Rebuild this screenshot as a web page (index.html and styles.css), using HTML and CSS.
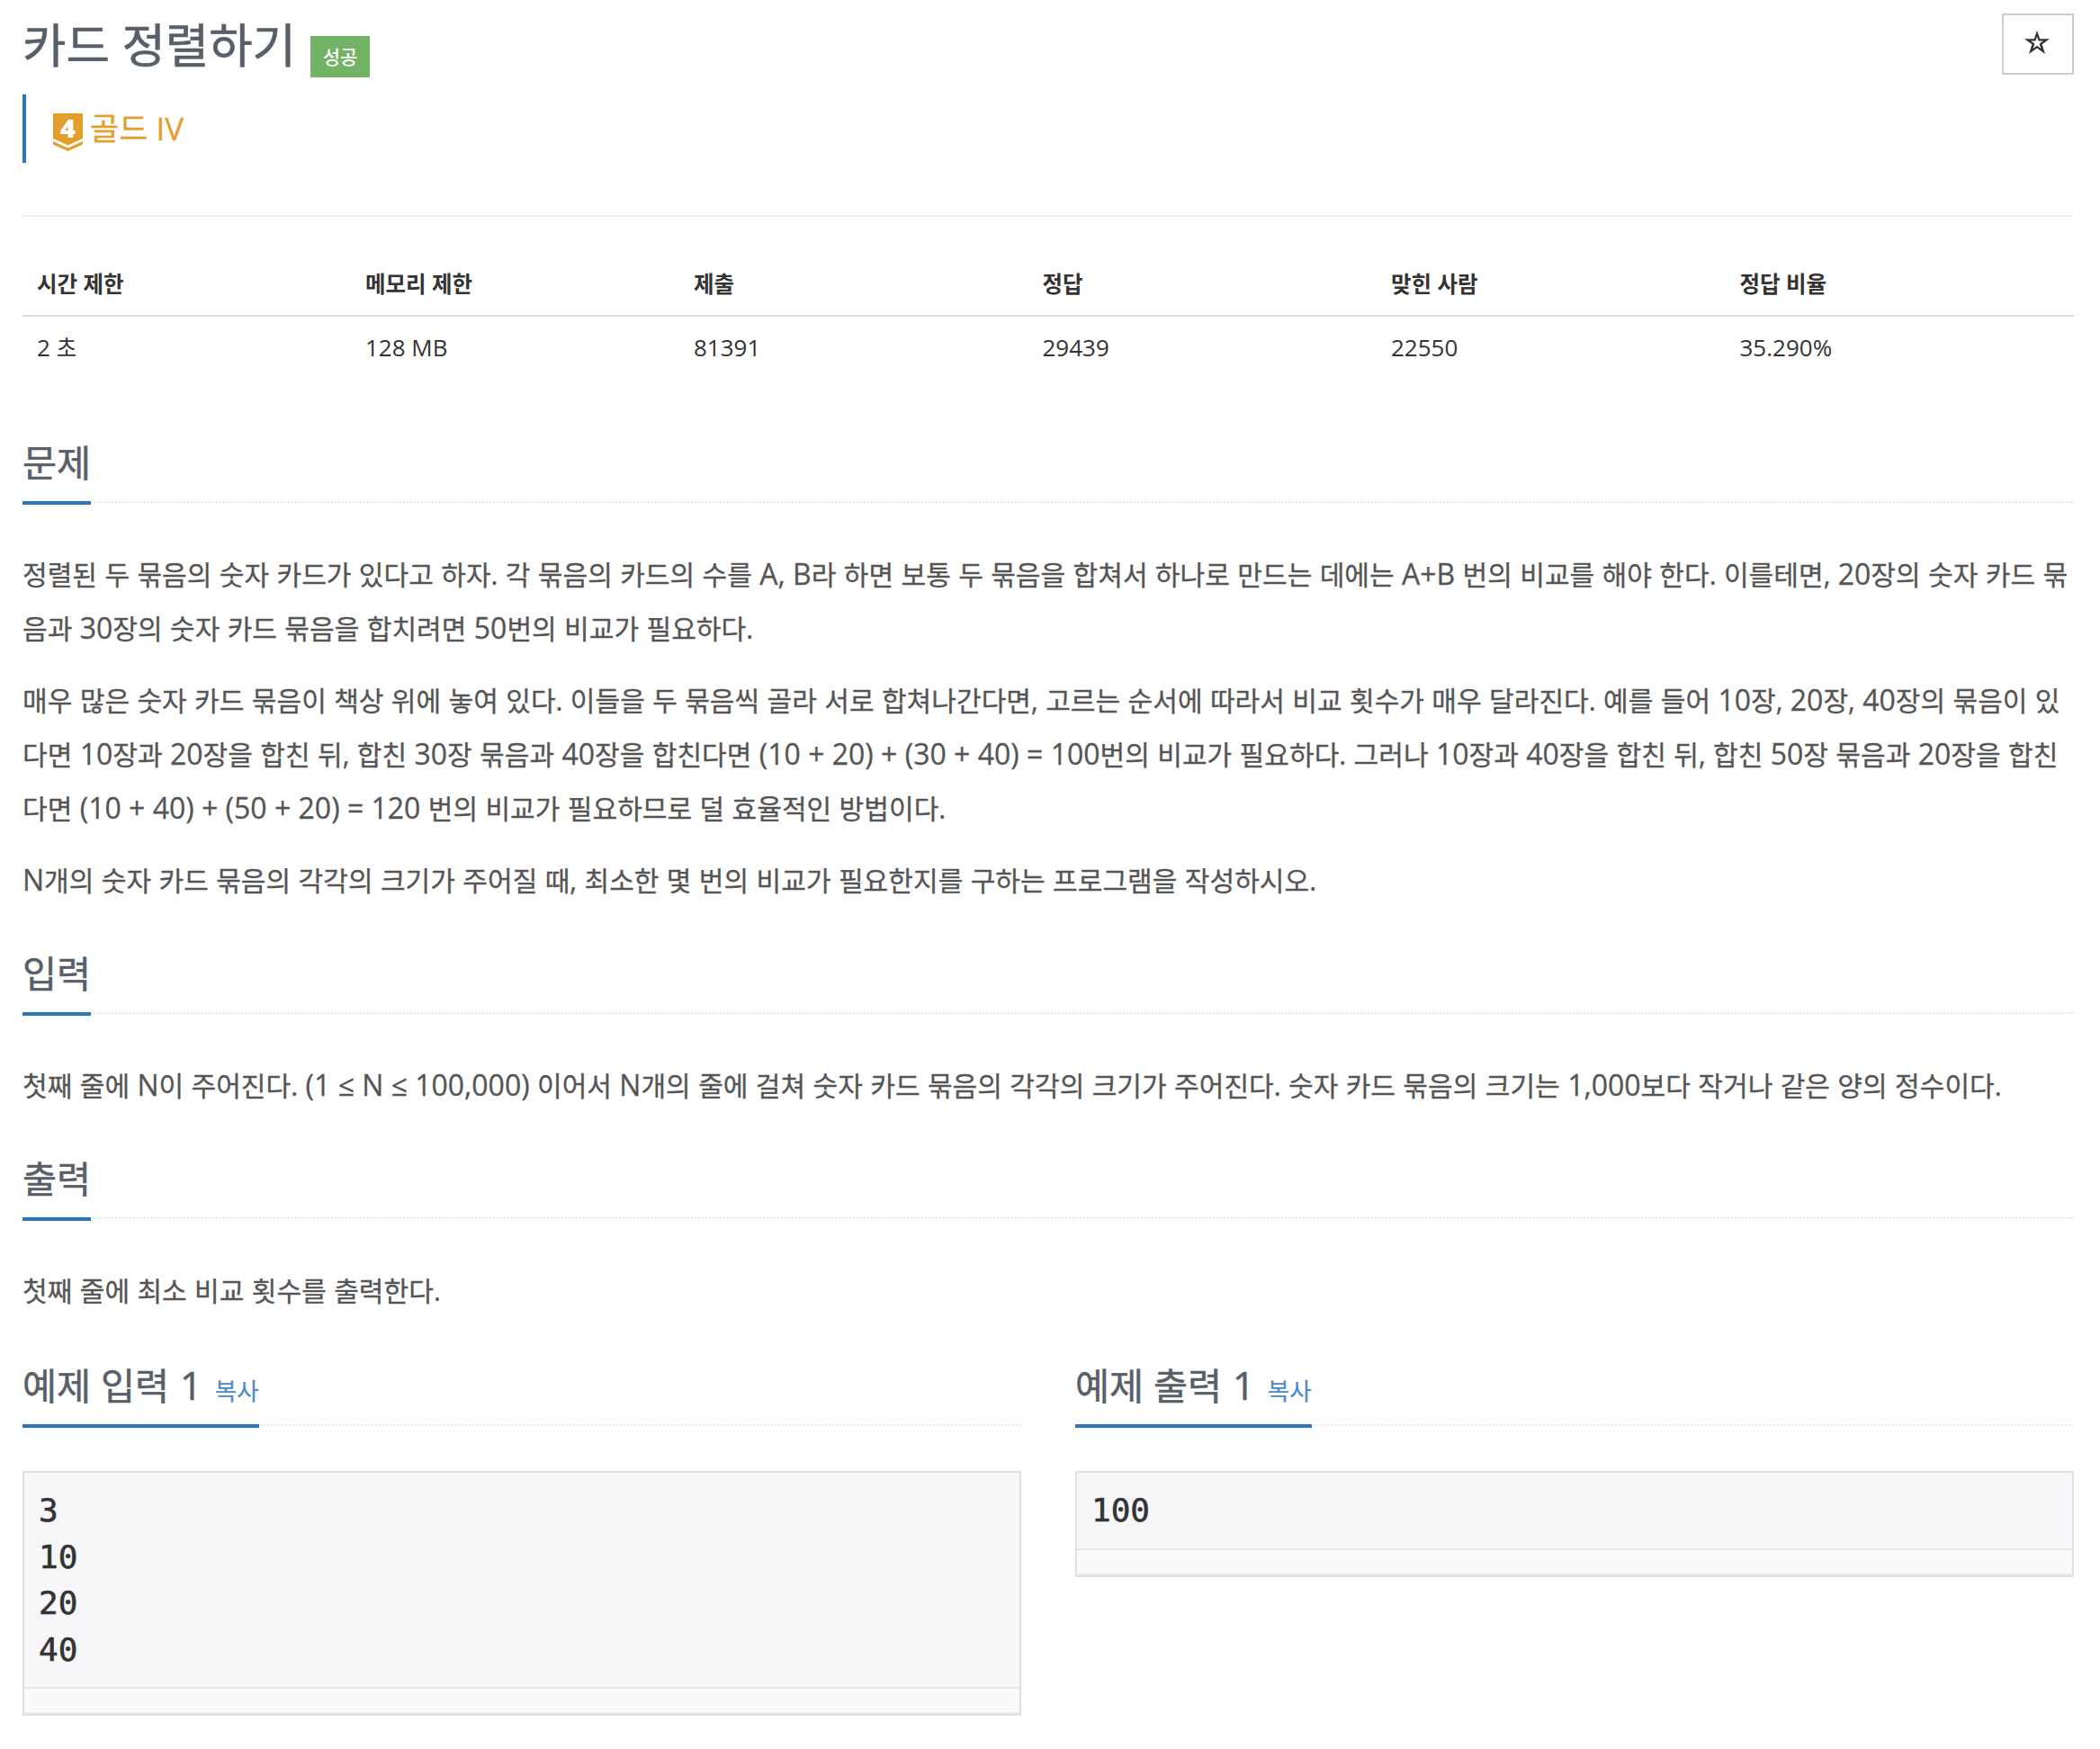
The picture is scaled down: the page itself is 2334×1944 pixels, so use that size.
FILE: index.html
```html
<!DOCTYPE html>
<html lang="ko">
<head>
    <meta charset="UTF-8">
    <title>카드 정렬하기</title>
    <link rel="stylesheet" href="styles.css">
</head>
<body>
    <div class="container">
        <div class="page-header">
            <div class="title-row">
                <h1><span class="problem-title">카드 정렬하기</span><span class="label-ac">성공</span></h1>
                <button type="button" class="button-star" aria-label="star">
                    <svg width="28" height="26" viewBox="0 0 28 26"><path fill="#333" fill-rule="evenodd" d="M14 0L17.2 9.2H28L19.6 15.2L23 26L14 19.6L5 26L8.4 15.2L0 9.2H10.8ZM14 6.8L12.4 11.6H7.2L11.4 14.6L9.6 20L14 16.8L18.4 20L16.6 14.6L20.8 11.6H15.6Z"/></svg>
                </button>
            </div>
            <blockquote class="tier">
                <svg class="tier-icon" width="33" height="42" viewBox="0 0 33 42">
                    <path d="M0 0H33V28L16.5 35.5L0 28Z" fill="#e39e2b"/>
                    <path d="M0 31L16.5 38.5L33 31V34.5L16.5 42L0 34.5Z" fill="#e39e2b"/>
                    <text x="16.5" y="27" text-anchor="middle" class="tier-number">4</text>
                </svg>
                <span>골드 IV</span>
            </blockquote>
        </div>

        <table class="table">
            <thead>
                <tr>
                    <th class="col-limit">시간 제한</th>
                    <th class="col-limit">메모리 제한</th>
                    <th>제출</th>
                    <th>정답</th>
                    <th>맞힌 사람</th>
                    <th>정답 비율</th>
                </tr>
            </thead>
            <tbody>
                <tr>
                    <td>2 <span class="unit">초</span></td>
                    <td>128 MB</td>
                    <td>81391</td>
                    <td>29439</td>
                    <td>22550</td>
                    <td>35.290%</td>
                </tr>
            </tbody>
        </table>

        <section class="section">
            <div class="headline"><h2>문제</h2></div>
            <div class="problem-text">
                <p>정렬된 두 묶음의 숫자 카드가 있다고 하자. 각 묶음의 카드의 수를 <span class="en">A, B</span>라 하면 보통 두 묶음을 합쳐서 하나로 만드는 데에는 <span class="en">A+B</span> 번의 비교를 해야 한다. 이를테면, <span class="en">20</span>장의 숫자 카드 묶<br>음과 <span class="en">30</span>장의 숫자 카드 묶음을 합치려면 <span class="en">50</span>번의 비교가 필요하다.</p>
                <p>매우 많은 숫자 카드 묶음이 책상 위에 놓여 있다. 이들을 두 묶음씩 골라 서로 합쳐나간다면, 고르는 순서에 따라서 비교 횟수가 매우 달라진다. 예를 들어 <span class="en">10</span>장, <span class="en">20</span>장, <span class="en">40</span>장의 묶음이 있<br>다면 <span class="en">10</span>장과 <span class="en">20</span>장을 합친 뒤, 합친 <span class="en">30</span>장 묶음과 <span class="en">40</span>장을 합친다면 <span class="en">(10 + 20) + (30 + 40) = 100</span>번의 비교가 필요하다. 그러나 <span class="en">10</span>장과 <span class="en">40</span>장을 합친 뒤, 합친 <span class="en">50</span>장 묶음과 <span class="en">20</span>장을 합친<br>다면 <span class="en">(10 + 40) + (50 + 20) = 120</span> 번의 비교가 필요하므로 덜 효율적인 방법이다.</p>
                <p><span class="en">N</span>개의 숫자 카드 묶음의 각각의 크기가 주어질 때, 최소한 몇 번의 비교가 필요한지를 구하는 프로그램을 작성하시오.</p>
            </div>
        </section>

        <section class="section">
            <div class="headline"><h2>입력</h2></div>
            <div class="problem-text">
                <p>첫째 줄에 <span class="en">N</span>이 주어진다. <span class="en">(1 ≤ N ≤ 100,000)</span> 이어서 <span class="en">N</span>개의 줄에 걸쳐 숫자 카드 묶음의 각각의 크기가 주어진다. 숫자 카드 묶음의 크기는 <span class="en">1,000</span>보다 작거나 같은 양의 정수이다.</p>
            </div>
        </section>

        <section class="section">
            <div class="headline"><h2>출력</h2></div>
            <div class="problem-text">
                <p>첫째 줄에 최소 비교 횟수를 출력한다.</p>
            </div>
        </section>

        <div class="samples">
            <section class="sample">
                <div class="headline"><h2>예제 입력 <span class="number">1</span> <a class="copy">복사</a></h2></div>
                <div class="sample-box">
<pre class="sampledata">3
10
20
40</pre>
                    <div class="sample-foot"></div>
                </div>
            </section>
            <section class="sample">
                <div class="headline"><h2>예제 출력 <span class="number">1</span> <a class="copy">복사</a></h2></div>
                <div class="sample-box">
<pre class="sampledata">100</pre>
                    <div class="sample-foot"></div>
                </div>
            </section>
        </div>
    </div>
</body>
</html>
```
FILE: styles.css
```css
* {
    box-sizing: border-box;
}

body {
    margin: 0;
    background: #fff;
    color: #333;
    font-family: "Open Sans", "Noto Sans CJK KR", sans-serif;
    font-size: 26px;
}

h1, h2, p, pre, blockquote {
    margin: 0;
    font-weight: normal;
}

.container {
    padding: 15px 29px 0 25px;
}

.page-header {
    height: 226px;
    border-bottom: 2px solid #eee;
}

.title-row {
    display: flex;
    justify-content: space-between;
    height: 90px;
}

h1 {
    display: flex;
    color: #585f69;
    font-size: 52.6px;
    line-height: 70px;
    -webkit-text-stroke: 0.6px;
}

.problem-title {
    width: 302px;
    white-space: nowrap;
}

.label-ac {
    align-self: flex-start;
    width: 66px;
    height: 46px;
    margin: 25px 0 0 18px;
    background: #72b365;
    color: #fff;
    font-size: 21px;
    font-weight: 500;
    line-height: 46px;
    text-align: center;
    -webkit-text-stroke: 0;
}

.button-star {
    display: flex;
    align-items: center;
    justify-content: center;
    width: 80px;
    height: 68px;
    padding: 0 2px 4px 0;
    border: 2px solid #ccc;
    background: #fff;
}

.tier {
    display: flex;
    height: 76px;
    padding: 21px 0 0 30px;
    border-left: 4px solid #2d76bd;
    color: #e39e2b;
    font-size: 35px;
    line-height: 33px;
    -webkit-text-stroke: 0.3px;
}

.tier-icon {
    margin-right: 8px;
    overflow: visible;
}

.tier-number {
    fill: #fff;
    font-size: 29px;
    font-weight: 800;
}

.table {
    width: 100%;
    margin-top: 39px;
    border-collapse: collapse;
    table-layout: fixed;
    text-align: left;
    line-height: 38px;
}

.table th {
    height: 71px;
    padding: 17px 16px 15px;
    border-bottom: 2px solid #ddd;
    font-size: 24.5px;
}

.table td {
    height: 71px;
    padding: 15px 16px 17px;
}

.table .unit {
    font-size: 24.5px;
    line-height: 1;
}

.table .col-limit {
    width: 365px;
}

.table + .section {
    margin-top: 39px;
}

.headline {
    display: flex;
    align-items: flex-end;
    height: 98px;
    border-bottom: 2px dotted #e4e9f0;
}

.headline h2 {
    margin-bottom: -4px;
    padding-bottom: 13px;
    border-bottom: 4px solid #2d76bd;
    color: #585f69;
    font-size: 41.4px;
    line-height: 60px;
    -webkit-text-stroke: 0.5px;
}

.problem-text {
    padding-top: 50px;
    color: #555;
    font-size: 30.1px;
    line-height: 60px;
    white-space: nowrap;
    word-spacing: 0.5px;
    -webkit-text-stroke: 0.3px;
}

.problem-text p {
    margin-bottom: 20px;
}

/* latin letters and digits run a little larger than hangul */
.en {
    font-size: 32px;
    line-height: 1;
    word-spacing: 0;
}

.samples {
    display: flex;
    gap: 60px;
}

.sample {
    flex: 1;
}

.sample .headline {
    height: 100px;
}

.sample h2 {
    padding-bottom: 7px;
}

.number {
    margin-left: 1px;
    font-size: 44px;
    line-height: 1;
}

.copy {
    margin-left: 3px;
    color: #4a8bcb;
    font-size: 26.5px;
    -webkit-text-stroke: 0.2px;
}

.sample-box {
    margin-top: 50px;
    border: 2px solid #e0e0e5;
}

.sampledata {
    padding: 16px;
    background: #f7f7f9;
    font-family: "DejaVu Sans Mono", monospace;
    font-size: 36px;
    line-height: 51.5px;
    -webkit-text-stroke: 0.6px #333;
}

.sample-foot {
    height: 30px;
    border-top: 2px solid #e7e7e7;
    border-bottom: 2px solid #ececec;
    background: #fafafa;
}
```
